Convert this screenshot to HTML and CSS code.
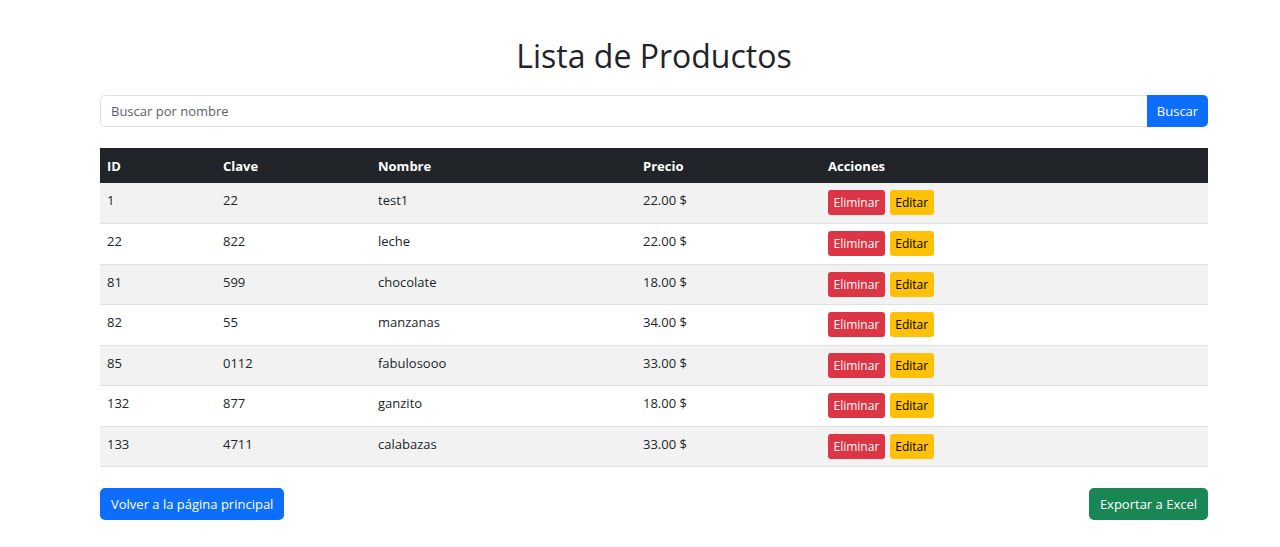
FILE: index.html
```html
<!DOCTYPE html>
<html lang="es">
<head>
<meta charset="utf-8">
<title>Lista de Productos</title>
<link rel="stylesheet" href="styles.css">
</head>
<body>
<div class="container">
  <h1 class="title">Lista de Productos</h1>
  <form class="search">
    <input class="search-input" type="text" placeholder="Buscar por nombre">
    <button class="btn btn-primary search-btn" type="button">Buscar</button>
  </form>
  <table class="table">
    <colgroup>
      <col class="c-id"><col class="c-clave"><col class="c-nombre"><col class="c-precio"><col class="c-acc">
    </colgroup>
    <thead>
      <tr><th>ID</th><th>Clave</th><th>Nombre</th><th>Precio</th><th>Acciones</th></tr>
    </thead>
    <tbody>
      <tr><td>1</td><td>22</td><td>test1</td><td>22.00 $</td><td class="acts"><span class="act"><button class="sbtn del">Eliminar</button><button class="sbtn edit">Editar</button></span></td></tr>
      <tr><td>22</td><td>822</td><td>leche</td><td>22.00 $</td><td class="acts"><span class="act"><button class="sbtn del">Eliminar</button><button class="sbtn edit">Editar</button></span></td></tr>
      <tr><td>81</td><td>599</td><td>chocolate</td><td>18.00 $</td><td class="acts"><span class="act"><button class="sbtn del">Eliminar</button><button class="sbtn edit">Editar</button></span></td></tr>
      <tr><td>82</td><td>55</td><td>manzanas</td><td>34.00 $</td><td class="acts"><span class="act"><button class="sbtn del">Eliminar</button><button class="sbtn edit">Editar</button></span></td></tr>
      <tr><td>85</td><td>0112</td><td>fabulosooo</td><td>33.00 $</td><td class="acts"><span class="act"><button class="sbtn del">Eliminar</button><button class="sbtn edit">Editar</button></span></td></tr>
      <tr><td>132</td><td>877</td><td>ganzito</td><td>18.00 $</td><td class="acts"><span class="act"><button class="sbtn del">Eliminar</button><button class="sbtn edit">Editar</button></span></td></tr>
      <tr><td>133</td><td>4711</td><td>calabazas</td><td>33.00 $</td><td class="acts"><span class="act"><button class="sbtn del">Eliminar</button><button class="sbtn edit">Editar</button></span></td></tr>
    </tbody>
  </table>
  <div class="footer">
    <button class="btn btn-primary">Volver a la página principal</button>
    <button class="btn btn-success">Exportar a Excel</button>
  </div>
</div>
</body>
</html>
```
FILE: styles.css
```css
* { box-sizing: border-box; }
body {
  margin: 0;
  background: #fff;
  color: #212529;
  font-family: "Open Sans", "Noto Sans", sans-serif;
  font-size: 13px;
}
.container {
  width: 1108px;
  margin-left: 100px;
  padding-top: 33px;
}
.title {
  margin: 0 0 16px;
  text-align: center;
  font-weight: 400;
  font-size: 32px;
  line-height: 46px;
  color: #212529;
}
.search {
  display: flex;
  height: 32px;
  margin: 0 0 21px;
}
.search-input {
  flex: 1;
  border: 1px solid #dee2e6;
  border-right: 0;
  border-radius: 5px 0 0 5px;
  padding: 0 10px;
  font: inherit;
  color: #212529;
  outline: none;
}
.search-input::placeholder { color: #5c636a; }
.btn {
  border: 0;
  border-radius: 5px;
  font: inherit;
  color: #fff;
  padding: 0 11px;
  height: 32px;
  cursor: pointer;
}
.btn-primary { background: #0d6efd; }
.btn-success { background: #198754; }
.search-btn {
  border-radius: 0 5px 5px 0;
  width: 61px;
  padding: 0;
}
.table {
  width: 100%;
  border-collapse: collapse;
  table-layout: fixed;
  margin: 0 0 21px;
}
.c-id { width: 116px; }
.c-clave { width: 155px; }
.c-nombre { width: 265px; }
.c-precio { width: 185px; }
.table th {
  background: #212529;
  color: #fff;
  font-weight: 700;
  text-align: left;
  height: 35px;
  padding: 0 7px;
}
.table td {
  height: 40.5px;
  padding: 8px 7px 0;
  line-height: 19px;
  border-bottom: 1px solid #dee2e6;
  vertical-align: top;
}
.table td.acts { padding-top: 7px; }
.table tbody tr:nth-child(odd) td { background: #f2f2f2; }
.act { display: flex; gap: 5px; }
.sbtn {
  border: 0;
  border-radius: 3px;
  height: 25px;
  padding: 0 5.5px;
  font-family: inherit;
  font-size: 12px;
}
.del { background: #dc3545; color: #fff; }
.edit { background: #ffc107; color: #000; }
.footer {
  display: flex;
  justify-content: space-between;
}
```
